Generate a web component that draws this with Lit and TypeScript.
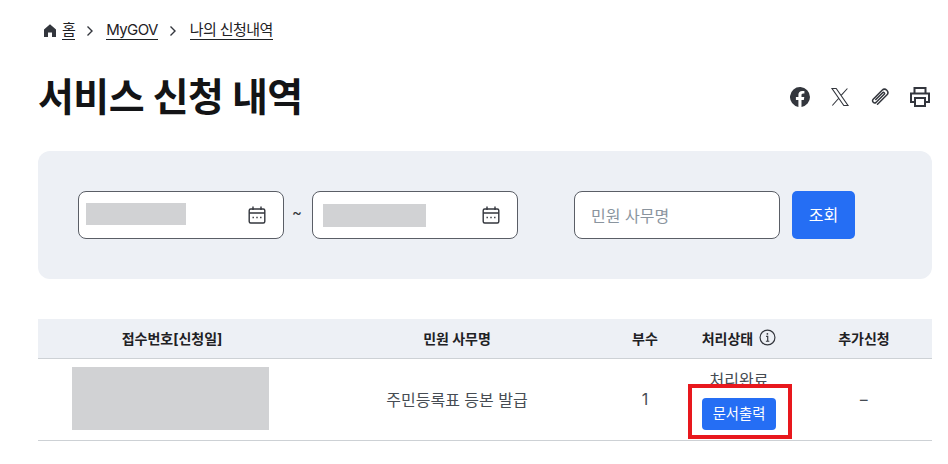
import { LitElement, html, css } from "lit";
import { customElement } from "lit/decorators.js";

const cal = html`<svg class="cal" viewBox="0 0 20 20" width="20" height="20" fill="none" stroke="#33363d" stroke-width="1.4">
  <rect x="2.2" y="4" width="15.6" height="14" rx="1.5"/><path d="M2.2 8h15.6M6 1.5V5M14 1.5V5"/>
  <path d="M5.5 12.5h1.4M9.3 12.5h1.4M13.1 12.5h1.4" stroke-width="1.6"/></svg>`;

@customElement("app-root")
export class AppRoot extends LitElement {
  static styles = css`
    :host { display: block; height: 464px; overflow: hidden; position: relative; background: #fff; color: #1e2124;
      font-family: Inter, "Noto Sans CJK KR", sans-serif; }
    .page { padding: 19px 16px 0 38px; }
    .crumbs { display: flex; align-items: center; height: 23px; padding-left: 6px; font-size: 15px; color: #1e2124; }
    .crumbs a { display: block; line-height: 19px; margin-bottom: 1px; border-bottom: 1px solid #1e2124; letter-spacing: -0.6px; white-space: nowrap; }
    .home { margin-right: 6px; display: block; }
    .sep { display: block; margin: 0 12px 0 11px; }
    .sep.last { margin: 0 13px 0 11px; }
    .head { display: flex; justify-content: space-between; align-items: center; margin-top: 27px; height: 56px; }
    h1 { margin: 0; font-size: 39px; font-weight: 700; line-height: 56px; color: #131416; letter-spacing: -0.55px; white-space: nowrap; }
    .share { display: flex; gap: 20px; padding-right: 2px; }
    .share svg { display: block; }
    .panel { margin-top: 26px; height: 128px; background: #edf0f5; border-radius: 12px; padding: 40px; box-sizing: border-box; display: flex; align-items: flex-start; }
    .field { box-sizing: border-box; width: 206px; height: 48px; background: #fff; border: 1px solid #5a5e66; border-radius: 8px; display: flex; align-items: center; flex: none; }
    .date { justify-content: space-between; padding-right: 16px; }
    .mask { background: #d1d2d4; display: block; }
    .m1 { width: 100px; height: 22px; margin: -2px 0 0 7px; }
    .m2 { width: 103px; height: 23px; margin: 0 0 0 10px; }
    .tilde { width: 28px; padding-right: 2px; box-sizing: border-box; text-align: center; font-size: 15px; line-height: 43px; color: #33363d; }
    .search { margin-left: 56px; padding: 0 0 1px 16px; font-size: 16px; color: #8a949e; }
    .go { box-sizing: border-box; width: 63px; height: 48px; margin-left: 12px; background: #256ef4; border-radius: 5px; color: #fff; font-size: 16px; display: flex; align-items: center; justify-content: center; padding-bottom: 2px; }
    .grid { margin-top: 40px; display: grid; grid-template-columns: 268px 302px 74px 114px 136px; }
    .th { height: 40px; box-sizing: border-box; background: #edf0f5; border-bottom: 1px solid #cdd1d5; display: flex; align-items: center; justify-content: center; gap: 6px; font-size: 14px; font-weight: 700; color: #1e2124; padding-bottom: 2px; }
    .td { height: 82px; box-sizing: border-box; border-bottom: 1px solid #cdd1d5; display: flex; align-items: center; justify-content: center; font-size: 16px; color: #464c53; padding-bottom: 2px; }
    .m3 { width: 197px; height: 63px; margin: -1px 4px 0 0; }
    .status { flex-direction: column; justify-content: flex-start; padding: 13px 0 0; line-height: 16px; }
    .print { margin-top: 10px; width: 74px; height: 32px; border-radius: 4px; background: #256ef4; color: #fff; font-size: 14.300px; display: flex; align-items: center; justify-content: center; }
    .dash { transform: scaleX(1.500); }
    .mark { position: absolute; left: 688px; top: 384px; width: 104px; height: 55px; box-sizing: border-box; border: 4px solid #e8181d; }
  `;
  render() {
    return html`<div class="page">
      <nav class="crumbs">
        <svg class="home" viewBox="0 0 12 13" width="12" height="13" fill="#33363d"><path d="M6 .3 0 5.400V13h4V8.600h4V13h4V5.400z"/></svg>
        <a>홈</a>
        <svg class="sep" viewBox="0 0 8 12" width="8" height="12" fill="none" stroke="#33363d" stroke-width="1.4"><path d="M1.500 1.500 6 6l-4.500 4.500"/></svg>
        <a>MyGOV</a>
        <svg class="sep last" viewBox="0 0 8 12" width="8" height="12" fill="none" stroke="#33363d" stroke-width="1.4"><path d="M1.500 1.500 6 6l-4.500 4.500"/></svg>
        <a>나의 신청내역</a>
      </nav>
      <div class="head">
        <h1>서비스 신청 내역</h1>
        <div class="share">
          <svg viewBox="0 0 20 20" width="20" height="20"><path fill="#33363d" d="M20 10a10 10 0 1 0-11.600 9.900v-7H5.900V10h2.500V7.800c0-2.500 1.500-3.900 3.800-3.900 1.100 0 2.200.2 2.200.2v2.500h-1.200c-1.300 0-1.700.8-1.700 1.600V10h2.800l-.5 2.900h-2.300v7A10 10 0 0 0 20 10"/></svg>
          <svg viewBox="0 0 20 20" width="20" height="20" fill="none" stroke="#33363d" stroke-width="1.100"><path d="M2 1.500h4.200L18 18.500h-4.200zM17.400 1.500 10.900 8.700M9 11 2.300 18.500"/></svg>
          <svg viewBox="0 0 20 20" width="20" height="20" fill="none" stroke="#33363d" stroke-width="1.500" stroke-linecap="round"><path d="M7.500 17.200 16.800 8a3.300 3.300 0 0 0-4.700-4.700L3 12.400a2.200 2.200 0 0 0 3 3.100l8.200-8.200a1.100 1.100 0 0 0-1.600-1.600L5.800 12.500"/></svg>
          <svg viewBox="0 0 20 20" width="20" height="20" fill="none" stroke="#33363d" stroke-width="2"><path d="M4.500 6V1h11v5M4.500 15H1V6.500h18V15h-3.500"/><rect x="5" y="11" width="10" height="8"/></svg>
        </div>
      </div>
      <section class="panel">
        <div class="field date"><span class="mask m1"></span>${cal}</div>
        <div class="tilde">~</div>
        <div class="field date"><span class="mask m2"></span>${cal}</div>
        <div class="field search">민원 사무명</div>
        <div class="go">조회</div>
      </section>
      <div class="grid">
        <div class="th">접수번호[신청일]</div>
        <div class="th">민원 사무명</div>
        <div class="th">부수</div>
        <div class="th">처리상태
          <svg viewBox="0 0 16 16" width="17" height="17" fill="none" stroke="#33363d" stroke-width="1.100"><circle cx="8" cy="8" r="7"/><path d="M6.700 7h1.500v4.300M6.500 11.500h3.200"/><path d="M7.200 4.600h1.400" stroke-width="1.500"/></svg>
        </div>
        <div class="th">추가신청</div>
        <div class="td"><span class="mask m3"></span></div>
        <div class="td">주민등록표 등본 발급</div>
        <div class="td">1</div>
        <div class="td status">처리완료<div class="print">문서출력</div></div>
        <div class="td"><span class="dash">-</span></div>
      </div>
    </div>
    <div class="mark"></div>`;
  }
}
